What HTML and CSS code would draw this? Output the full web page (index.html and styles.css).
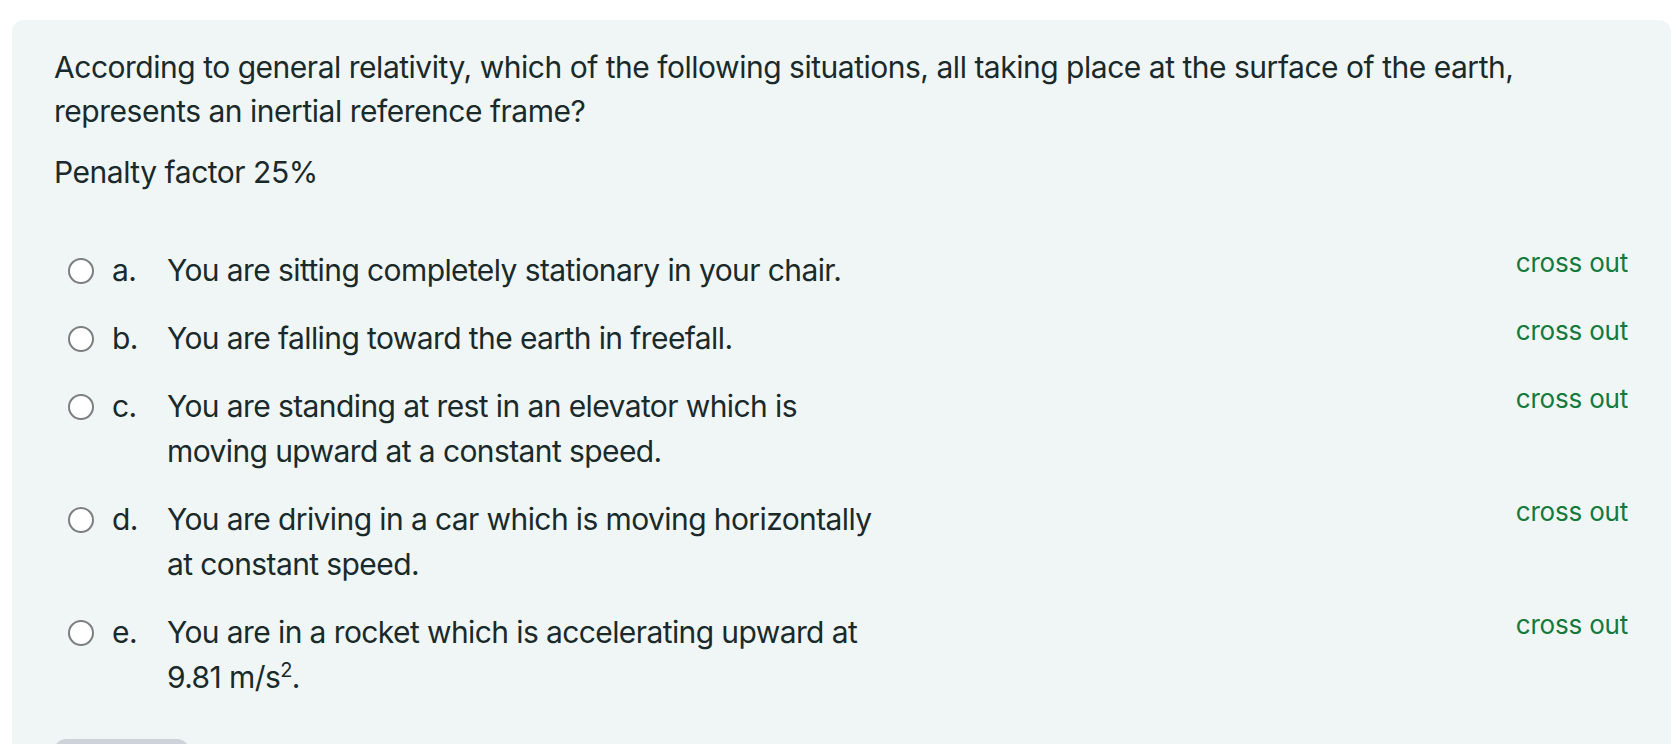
FILE: index.html
```html
<!DOCTYPE html>
<html lang="en">
<head>
<meta charset="utf-8">
<title>Question</title>
<link rel="stylesheet" href="styles.css">
</head>
<body>
<div class="page">
  <div class="formulation">
    <p class="qtext">According to general relativity, which of the following situations, all taking place at the surface of the earth, represents an inertial reference frame?</p>
    <p class="penalty">Penalty factor 25%</p>
    <div class="answers">
      <div class="option">
        <span class="radio"></span>
        <span class="num">a.</span>
        <span class="text">You are sitting completely stationary in your chair.</span>
        <a class="cross">cross out</a>
      </div>
      <div class="option">
        <span class="radio"></span>
        <span class="num">b.</span>
        <span class="text">You are falling toward the earth in freefall.</span>
        <a class="cross">cross out</a>
      </div>
      <div class="option">
        <span class="radio"></span>
        <span class="num">c.</span>
        <span class="text">You are standing at rest in an elevator which is moving upward at a constant speed.</span>
        <a class="cross">cross out</a>
      </div>
      <div class="option">
        <span class="radio"></span>
        <span class="num">d.</span>
        <span class="text">You are driving in a car which is moving horizontally at constant speed.</span>
        <a class="cross">cross out</a>
      </div>
      <div class="option">
        <span class="radio"></span>
        <span class="num">e.</span>
        <span class="text">You are in a rocket which is accelerating upward at <span class="math">9.81 m/s<sup>2</sup></span>.</span>
        <a class="cross">cross out</a>
      </div>
    </div>
    <button class="check" type="button">Check</button>
  </div>
</div>
</body>
</html>
```

FILE: styles.css
```css
* { box-sizing: border-box; }
html, body { margin: 0; padding: 0; background: #ffffff; }
body {
  font-family: Inter, "Noto Sans", "Liberation Sans", sans-serif;
  color: #1a2a2b;
  overflow: hidden;
}
.page {
  padding: 20px 7px 0 12px;
}
.formulation {
  background: #f0f6f6;
  border-radius: 12px;
  padding: 26px 43px 40px 42px;
  height: 760px;
}
.qtext {
  margin: 0 0 18px 0;
  font-size: 30px;
  line-height: 43.5px;
  letter-spacing: -0.48px;
}
.penalty {
  margin: 0 0 42px 0;
  font-size: 30px;
  line-height: 43.5px;
  letter-spacing: -0.48px;
}
.answers {
  display: flex;
  flex-direction: column;
  padding-left: 14px;
}
.option {
  display: flex;
  align-items: flex-start;
  padding: 11.5px 0;
  font-size: 30px;
  line-height: 45px;
  letter-spacing: -0.6px;
}
.radio {
  flex: 0 0 auto;
  width: 26px;
  height: 26px;
  margin-top: 9.5px;
  border: 2px solid #7c7f80;
  border-radius: 50%;
  background: #ffffff;
}
.num {
  flex: 0 0 auto;
  width: 55px;
  margin-left: 18px;
}
.text {
  flex: 0 1 auto;
  max-width: 710px;
}
.math {
  white-space: nowrap;
}
.math sup {
  font-size: 20px;
  line-height: 0;
  vertical-align: 0.55em;
}
.cross {
  margin-left: auto;
  margin-top: 2px;
  font-size: 26px;
  line-height: 26px;
  letter-spacing: -0.2px;
  color: #137a3b;
  white-space: nowrap;
}
.check {
  display: block;
  margin: 27px 0 0 0;
  width: 135px;
  height: 46px;
  border: none;
  border-radius: 12px;
  background: #ced3da;
  color: #1a2a2b;
  font-family: inherit;
  font-size: 26px;
}
```
